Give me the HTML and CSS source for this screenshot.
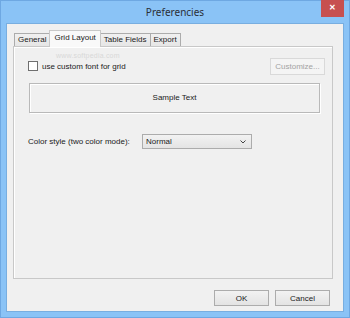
FILE: index.html
```html
<!DOCTYPE html>
<html lang="en">
<head>
    <meta charset="UTF-8">
    <title>Preferencies</title>
    <link rel="stylesheet" href="styles.css">
</head>
<body>
    <div class="window">
        <div class="titlebar">
            <span></span>
            <span class="title">Preferencies</span>
            <span class="close">&#x2715;</span>
        </div>
        <div class="client">
            <div class="tabs">
                <span class="tab">General</span>
                <span class="tab active">Grid Layout</span>
                <span class="tab">Table Fields</span>
                <span class="tab">Export</span>
            </div>
            <div class="page">
                <span class="watermark">www.softpedia.com</span>
                <div class="font-row">
                    <label class="check"><span class="box"></span>use custom font for grid</label>
                    <button class="btn customize" disabled>Customize...</button>
                </div>
                <div class="sample">Sample Text</div>
                <div class="color-row">
                    <label>Color style (two color mode):</label>
                    <div class="select">
                        <span>Normal</span>
                        <svg width="6" height="4" viewBox="0 0 6 4"><path d="M0.5 0.5 L3 3 L5.5 0.5" fill="none" stroke="#444" stroke-width="1"/></svg>
                    </div>
                </div>
            </div>
            <div class="actions">
                <button class="btn">OK</button>
                <button class="btn">Cancel</button>
            </div>
        </div>
    </div>
</body>
</html>
```

FILE: styles.css
```css
body {
    margin: 0;
    padding: 0;
    font-family: "Liberation Sans", Arial, sans-serif;
    font-size: 8px;
    color: #1a1a1a;
    background-color: #8ac3f6;
}

.window {
    width: 350px;
    height: 318px;
    display: flex;
    flex-direction: column;
    box-sizing: border-box;
    border: 1px solid #6ea8e2;
}

.titlebar {
    height: 22px;
    display: grid;
    grid-template-columns: 1fr auto 1fr;
    align-items: start;
}

.title {
    font-family: "Noto Sans", "Open Sans", sans-serif;
    font-size: 10px;
    color: #2a2f36;
    line-height: 22px;
}

.close {
    justify-self: end;
    margin-top: -1px;
    margin-right: 5px;
    width: 23px;
    height: 17px;
    background-color: #c75050;
    color: #fff;
    font-size: 8px;
    font-weight: bold;
    text-align: center;
    line-height: 16px;
}

.client {
    flex: 1;
    margin: 0 5px 5px;
    padding: 6px 10px 5px 6px;
    background-color: #f0f0f0;
    display: flex;
    flex-direction: column;
    border: 1px solid #78aee0;
}

.tabs {
    display: flex;
    align-items: flex-end;
    height: 16px;
    padding-left: 1px;
}

.tab {
    height: 12px;
    line-height: 12px;
    padding: 0 3px;
    background: linear-gradient(#f0f0f0, #e6e6e6);
    border: 1px solid #acacac;
    border-bottom: none;
    margin-right: -1px;
}

.tab.active {
    height: 16px;
    line-height: 14px;
    background-color: #f9f9f9;
    background-image: none;
    border-color: #c8c8c8;
    position: relative;
    z-index: 1;
    margin-bottom: -1px;
    padding: 0 4px;
}

.page {
    flex: 1;
    position: relative;
    border: 1px solid #c8c8c8;
    box-shadow: inset 1px 1px 0 #fff;
    padding: 11px 7px 0 14px;
    display: flex;
    flex-direction: column;
}

.watermark {
    position: absolute;
    left: 42px;
    top: 5px;
    color: #d8d8d8;
    font-size: 7px;
    letter-spacing: 0.2px;
}

.font-row {
    display: flex;
    justify-content: space-between;
    align-items: center;
    height: 17px;
}

.check {
    display: flex;
    align-items: center;
    margin-top: -1px;
}

.box {
    width: 8px;
    height: 8px;
    border: 1px solid #6f6f6f;
    background-color: #fff;
    margin-right: 4px;
}

.btn {
    font-family: "Liberation Sans", Arial, sans-serif;
    font-size: 8px;
    width: 55px;
    height: 16px;
    padding: 0;
    color: #1a1a1a;
    background: linear-gradient(#f2f2f2, #e3e3e3);
    border: 1px solid #acacac;
}

.customize {
    height: 17px;
    color: #a3a3a3;
    background: #f4f4f4;
    border-color: #d9d9d9;
}

.sample {
    margin: 8px 5px 0 1px;
    height: 28px;
    line-height: 28px;
    text-align: center;
    border: 1px solid #b9b9b9;
    box-shadow: inset 1px 1px 0 #fff, 1px 1px 0 #fff;
}

.color-row {
    display: flex;
    align-items: center;
    margin-top: 21px;
}

.color-row label {
    width: 114px;
}

.select {
    height: 13px;
    border: 1px solid #acacac;
    background: linear-gradient(#f2f2f2, #e4e4e4);
    display: flex;
    align-items: center;
    justify-content: space-between;
    padding: 0 5px 0 3px;
    box-sizing: content-box;
    width: 100px;
}

.actions {
    display: flex;
    justify-content: flex-end;
    gap: 6px;
    padding-top: 11px;
    margin-right: 3px;
}
```
